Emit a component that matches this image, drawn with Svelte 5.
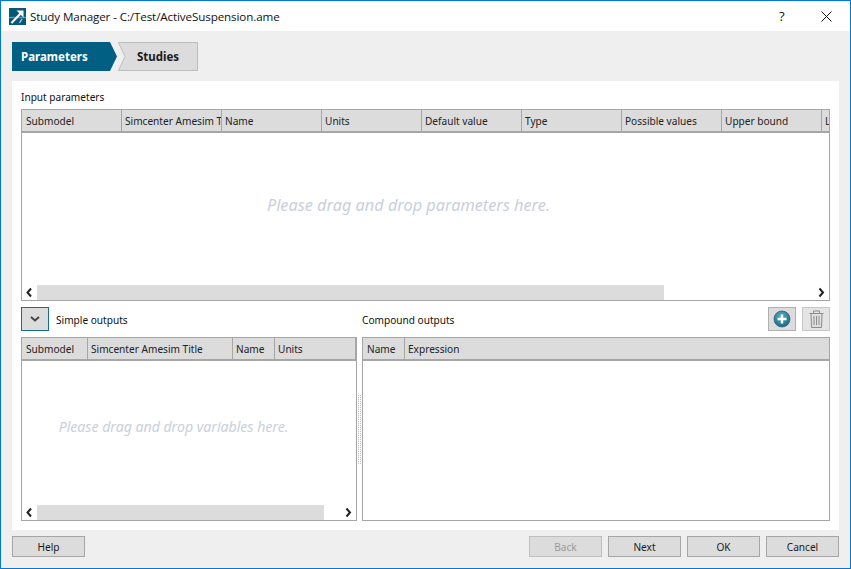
<script>
  const inputCols = ['Submodel','Simcenter Amesim Title','Name','Units','Default value','Type','Possible values','Upper bound','Lower bound'];
  const simpleCols = [['Submodel',65],['Simcenter Amesim Title',145],['Name',42],['Units',81]];
  const compoundCols = [['Name',41],['Expression',425]];
</script>

{#snippet chevL()}
  <svg class="chev" width="14" height="15" viewBox="0 0 14 15"><path d="M8.5 3.5 L5 7.5 L8.5 11.5" fill="none" stroke="#222" stroke-width="2"/></svg>
{/snippet}
{#snippet chevR()}
  <svg class="chev" width="14" height="15" viewBox="0 0 14 15"><path d="M4.5 3.5 L8 7.5 L4.5 11.5" fill="none" stroke="#222" stroke-width="2"/></svg>
{/snippet}

<div class="window">
  <header class="titlebar">
    <svg class="logo" width="17" height="17" viewBox="0 0 17 17">
      <rect width="17" height="17" fill="#0a5878"/>
      <path d="M0 9.5 H17" stroke="#5f9bb3" stroke-width="1.4"/>
      <path d="M2.5 15 L12.5 4.5" stroke="#fff" stroke-width="2"/>
      <path d="M7.5 2.5 H14.5 V9.5 Z" fill="#fff"/>
      <path d="M10.5 15 L13 11" stroke="#bcd6e0" stroke-width="1.2"/>
    </svg>
    <span class="title">Study Manager - C:/Test/ActiveSuspension.ame</span>
    <span class="help">?</span>
    <svg class="close" width="11" height="11" viewBox="0 0 11 11"><path d="M0.5 0.5 L10.5 10.5 M10.5 0.5 L0.5 10.5" stroke="#111" stroke-width="1"/></svg>
  </header>

  <main class="body">
    <nav class="tabs">
      <svg class="tabshape" width="105" height="29" viewBox="0 0 105 29"><path d="M0 0 H98 L105 14.5 L98 29 H0 Z" fill="#005f83"/></svg>
      <span class="tab active">Parameters</span>
      <div class="tab2">
        <svg class="tabshape" width="80" height="29" viewBox="0 0 80 29"><path d="M0.5 0.5 H79.5 V28.5 H0.5 L7 14.5 Z" fill="#dcdcdc" stroke="#bdbdbd"/></svg>
        <span class="tab">Studies</span>
      </div>
    </nav>

    <section class="panel">
      <div class="label top-label">Input parameters</div>
      <div class="table input-table">
        <div class="thead">
          {#each inputCols as c}
            <div class="th w100"><span>{c}</span></div>
          {/each}
        </div>
        <div class="tbody">
          <p class="hint big">Please drag and drop parameters here.</p>
        </div>
        <div class="hscroll">
          {@render chevL()}
          <div class="track"><div class="thumb t1"></div></div>
          {@render chevR()}
        </div>
      </div>

      <div class="midrow">
        <div class="mid-left">
          <button class="collapse" aria-label="collapse">
            <svg width="10" height="6" viewBox="0 0 10 6"><path d="M1 1 L5 4.5 L9 1" fill="none" stroke="#444" stroke-width="2"/></svg>
          </button>
          <span class="label">Simple outputs</span>
        </div>
        <div class="mid-right">
          <span class="label">Compound outputs</span>
          <button class="iconbtn" aria-label="add">
            <svg width="18" height="18" viewBox="0 0 18 18">
              <defs><radialGradient id="g" cx="0.45" cy="0.35" r="0.7"><stop offset="0" stop-color="#5fb3cc"/><stop offset="1" stop-color="#12627f"/></radialGradient></defs>
              <circle cx="9" cy="9" r="8" fill="url(#g)" stroke="#3c5f6d" stroke-width="0.8"/>
              <path d="M9 4.5 V13.5 M4.5 9 H13.5" stroke="#fff" stroke-width="2.4"/>
            </svg>
          </button>
          <button class="iconbtn disabled" aria-label="delete">
            <svg width="15" height="18" viewBox="0 0 15 18" fill="none" stroke="#8c8c8c" stroke-width="1">
              <path d="M0.5 3.5 H14.5 M4.5 3 V1 H10.5 V3"/>
              <path d="M2 4 L2.5 17.5 H12.5 L13 4" fill="#e0e0e0"/>
              <path d="M5 6 V15 M7.5 6 V15 M10 6 V15"/>
            </svg>
          </button>
        </div>
      </div>

      <div class="lower">
        <div class="table simple">
          <div class="thead">
            {#each simpleCols as [c, w]}
              <div class="th" style="width:{w}px"><span>{c}</span></div>
            {/each}
          </div>
          <div class="tbody">
            <p class="hint">Please drag and drop variables here.</p>
          </div>
          <div class="hscroll">
            {@render chevL()}
            <div class="track"><div class="thumb t2"></div></div>
            {@render chevR()}
          </div>
        </div>
        <div class="splitter"></div>
        <div class="table compound">
          <div class="thead">
            {#each compoundCols as [c, w]}
              <div class="th" style="width:{w}px"><span>{c}</span></div>
            {/each}
          </div>
          <div class="tbody"></div>
        </div>
      </div>
    </section>

    <footer class="footer">
      <button class="btn">Help</button>
      <div class="spacer"></div>
      <button class="btn off">Back</button>
      <button class="btn">Next</button>
      <button class="btn">OK</button>
      <button class="btn">Cancel</button>
    </footer>
  </main>
</div>

<style>
  :global(body) { margin: 0; background: #efefef; }
  * { box-sizing: border-box; }
  .window {
    width: 851px; height: 569px; border: 1px solid #0078d7;
    display: flex; flex-direction: column; overflow: hidden;
    font-family: "Noto Sans", "Open Sans", sans-serif; font-size: 11px; color: #1a1a1a;
  }
  .titlebar {
    height: 30px; background: #fff; display: flex; align-items: center; flex: none;
    padding-left: 8px; position: relative;
  }
  .logo { flex: none; }
  .title { margin-left: 4px; font-family: "Open Sans", sans-serif; font-size: 11.65px; color: #111; flex: 1; white-space: nowrap; letter-spacing: -0.12px; }
  .help { font-family: "Open Sans", sans-serif; font-size: 13px; width: 10px; margin-right: 32px; color: #111; }
  .close { margin-right: 18px; }

  .body { flex: 1; background: #efefef; padding: 11px 11px 0; display: flex; flex-direction: column; min-height: 0; }
  .tabs { height: 29px; display: flex; position: relative; flex: none; }
  .tabshape { position: absolute; left: 0; top: 0; }
  .tab { position: relative; font-weight: 700; font-size: 11.5px; line-height: 29px; }
  .tab.active { color: #fff; width: 106px; padding-left: 9px; }
  .tab2 { position: relative; width: 80px; padding-left: 19px; }

  .panel { margin-top: 10px; height: 449px; width: 827px; background: #fff; padding: 0 9px 0 9px; display: flex; flex-direction: column; flex: none; }
  .label { font-size: 10.1px; color: #111; white-space: nowrap; }
  .top-label { height: 28px; line-height: 32px; }

  .table { border: 1px solid #a6a6a6; background: #fff; display: flex; flex-direction: column; overflow: hidden; }
  .input-table { height: 192px; width: 809px; flex: none; }
  .thead { height: 23px; flex: none; display: flex; background: #dcdcdc; border-bottom: 2px solid #a6a6a6; overflow: hidden; }
  .th { flex: none; height: 21px; border-right: 1px solid #a6a6a6; padding-left: 3px; line-height: 23px; font-size: 10.1px; color: #222; white-space: nowrap; overflow: hidden; position: relative; }
  .th:first-child { margin-left: 1px; }
  .w100 { width: 100px; }
  .th.w100:first-child { width: 99px; }
  .tbody { flex: 1; display: flex; align-items: flex-start; justify-content: center; min-height: 0; }
  .hint { margin: 0; font-style: italic; color: #c9cfdc; font-size: 14.1px; line-height: 20px; }
  .hint.big { font-size: 16.3px; margin: 62px 0 0 -34px; }
  .simple .hint { margin: 56px 0 0 -31px; }
  .hscroll { height: 15px; flex: none; display: flex; align-items: center; }
  .chev { flex: none; }
  .chev:first-child { width: 15px; }
  .track { flex: 1; height: 15px; }
  .thumb { height: 15px; background: #dcdcdc; }
  .t1 { width: 627px; }
  .t2 { width: 287px; }

  .midrow { height: 36px; flex: none; display: flex; }
  .mid-left { width: 341px; display: flex; align-items: center; }
  .mid-left .label, .mid-right .label { position: relative; top: 1px; }
  .collapse { width: 28px; height: 24px; background: #dcdcdc; border: 1px solid #16708f; display: flex; align-items: center; justify-content: center; padding: 0; margin-right: 7px; }
  .mid-right { flex: 1; display: flex; align-items: center; }
  .mid-right .label { flex: 1; }
  .iconbtn { width: 28px; height: 24px; background: #dcdcdc; border: 1px solid #b0b0b0; display: flex; align-items: center; justify-content: center; padding: 0; margin-left: 6px; }
  .iconbtn.disabled { background: #e4e4e4; border-color: #c8c8c8; }

  .lower { display: flex; height: 184px; flex: none; }
  .simple { width: 336px; height: 184px; flex: none; }
  .compound { width: 468px; height: 184px; flex: none; }
  .splitter { width: 5px; flex: none; display: flex; align-items: center; justify-content: center; }
  .splitter::before { content: ""; width: 3px; height: 69px; background-image: radial-gradient(circle at 0.5px 0.5px, #b8b8b8 0.6px, transparent 0.7px); background-size: 2px 2px; }

  .footer { display: flex; gap: 6px; margin-top: 6px; flex: none; }
  .spacer { flex: 1; }
  .btn { width: 73px; height: 21px; padding: 0; background: #dcdcdc; border: 1px solid #a6a6a6; font: inherit; font-size: 10.1px; color: #1a1a1a; }
  .btn.off { color: #9a9a9a; border-color: #bfbfbf; }
</style>
